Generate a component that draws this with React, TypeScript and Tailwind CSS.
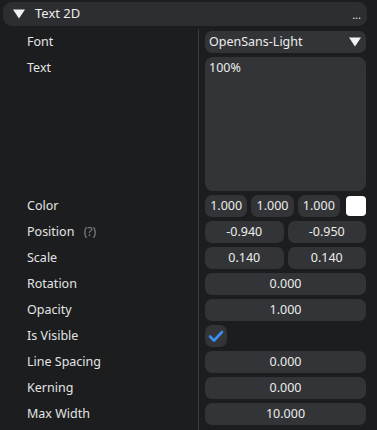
import type { ReactNode } from "react";

const box = "h-[22px] rounded-[7px] bg-[#333437] flex items-center text-[#ececec]";
const field = `${box} justify-center`;

function Row({ label, children }: { label: ReactNode; children: ReactNode }) {
  return (
    <div className="flex">
      <div className="w-[195px] shrink-0 pl-[24px] pt-[2px]">
        <div className="h-[22px] leading-[22px] text-[#e4e4e4]">{label}</div>
      </div>
      <div className="flex-1 border-l border-[#3b3c3f] pl-[6px] py-[2px]">{children}</div>
    </div>
  );
}

function Num({ value }: { value: string }) {
  return <div className={`${field} flex-1`}>{value}</div>;
}

export default function App() {
  return (
    <div
      className="w-[377px] h-[430px] overflow-hidden bg-[#1c1d1f] pt-[2px] pl-[3px] pr-[11px] text-[12.5px]"
      style={{ fontFamily: '"Noto Sans", "Open Sans", sans-serif' }}
    >
      <div className="h-[24px] mr-[-1px] rounded-[9px] bg-[#2d2e31] flex items-center pl-[10px] pr-[6px] text-[#ececec]">
        <svg width="12" height="10" viewBox="0 0 12 10" className="mr-[10px]">
          <polygon points="0,0.5 12,0.5 6,9.5" fill="#f2f2f2" />
        </svg>
        <span className="text-[13px]">Text 2D</span>
        <span className="ml-auto text-[11px] leading-none">...</span>
      </div>

      <div className="mt-[3px]">
        <Row label="Font">
          <div className={`${box} justify-between pl-[4px] pr-[5px]`}>
            <span>OpenSans-Light</span>
            <svg width="12" height="10" viewBox="0 0 12 10">
              <polygon points="0,0.5 12,0.5 6,9.5" fill="#f2f2f2" />
            </svg>
          </div>
        </Row>
        <Row label="Text">
          <div className="h-[134px] rounded-[8px] bg-[#333437] px-[4px] pt-[2px] text-[#ececec]">100%</div>
        </Row>
        <Row label="Color">
          <div className="flex gap-[4px] items-center">
            <Num value="1.000" />
            <Num value="1.000" />
            <Num value="1.000" />
            <div className="ml-[2px] w-[20px] h-[20px] rounded-[4px] bg-white" />
          </div>
        </Row>
        <Row
          label={
            <>
              Position <span className="ml-[6px] text-[12px] text-[#85868a]">(?)</span>
            </>
          }
        >
          <div className="flex gap-[4px]">
            <Num value="-0.940" />
            <Num value="-0.950" />
          </div>
        </Row>
        <Row label="Scale">
          <div className="flex gap-[4px]">
            <Num value="0.140" />
            <Num value="0.140" />
          </div>
        </Row>
        <Row label="Rotation">
          <div className={field}>0.000</div>
        </Row>
        <Row label="Opacity">
          <div className={field}>1.000</div>
        </Row>
        <Row label="Is Visible">
          <div className="w-[22px] h-[22px] rounded-[7px] bg-[#333437] flex items-center justify-center">
            <svg width="16" height="13" viewBox="0 0 16 13">
              <polyline points="2,6.5 6,10.5 14,2" fill="none" stroke="#3b8ef0" strokeWidth="2.6" strokeLinecap="round" strokeLinejoin="round" />
            </svg>
          </div>
        </Row>
        <Row label="Line Spacing">
          <div className={field}>0.000</div>
        </Row>
        <Row label="Kerning">
          <div className={field}>0.000</div>
        </Row>
        <Row label="Max Width">
          <div className={field}>10.000</div>
        </Row>
        <Row label="">
          <div className="h-[22px]" />
        </Row>
      </div>
    </div>
  );
}
